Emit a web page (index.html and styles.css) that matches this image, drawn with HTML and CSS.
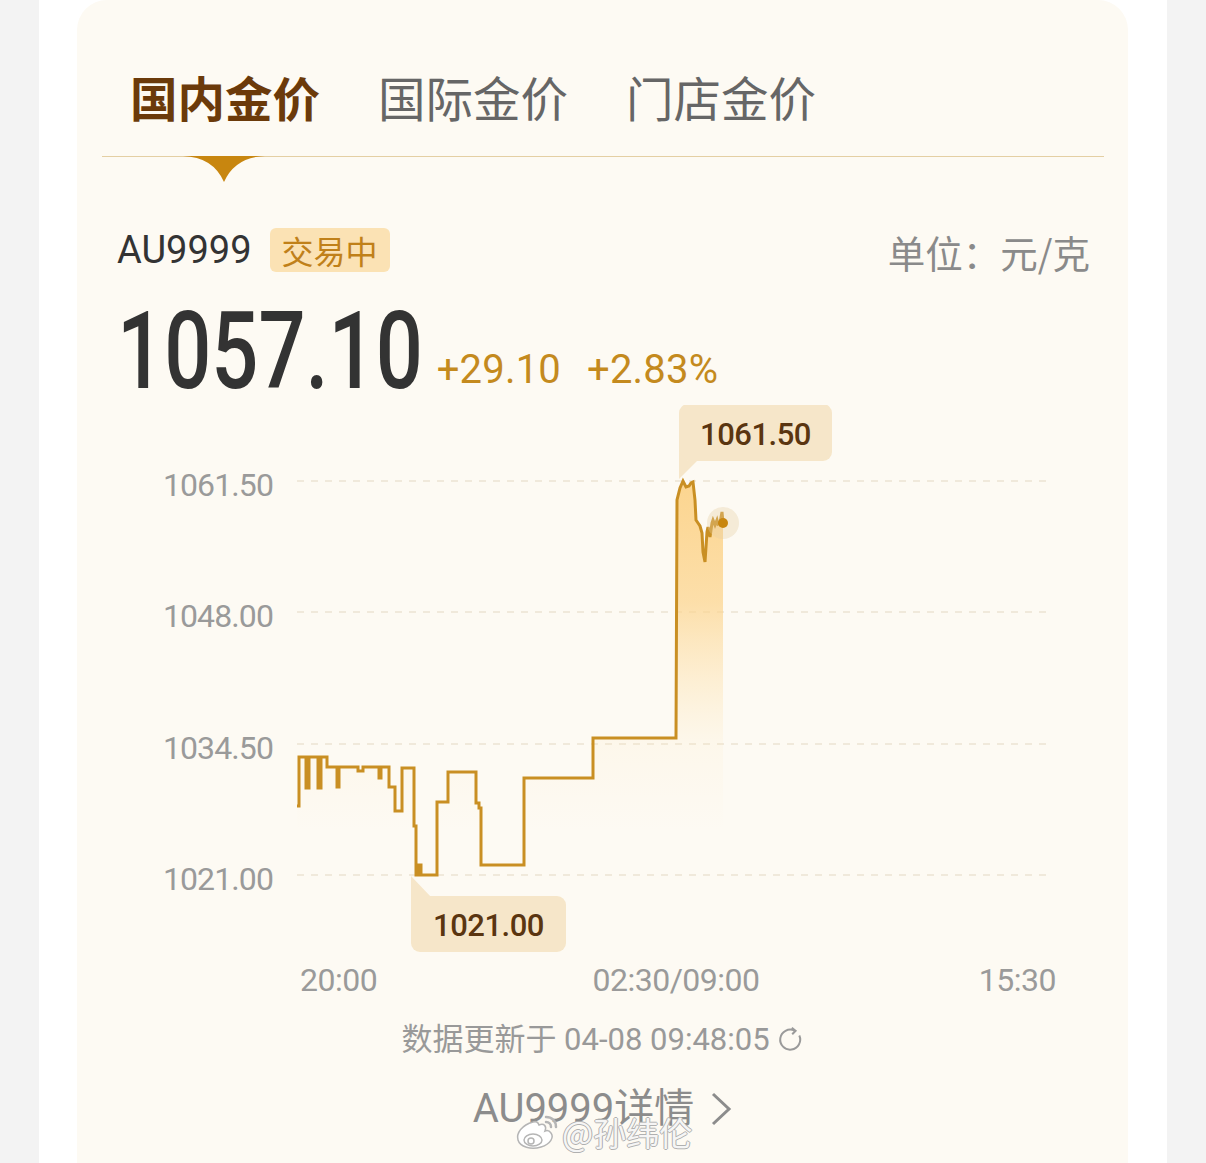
FILE: index.html
```html
<!DOCTYPE html>
<html lang="zh-CN">
<head>
<meta charset="utf-8">
<title>金价</title>
<link rel="stylesheet" href="styles.css">
</head>
<body>
<div class="page">
  <div class="card">
    <div class="tabs">
      <div class="tab active">国内金价<svg class="indicator" width="82" height="26" viewBox="0 0 82 26"><path d="M0 0 Q30 1 41 26 Q52 1 82 0 Z" fill="#c8860f"/></svg></div>
      <div class="tab">国际金价</div>
      <div class="tab">门店金价</div>
    </div>

    <div class="info-row">
      <div class="symbol">AU9999</div>
      <div class="badge">交易中</div>
      <div class="unit">单位：元/克</div>
    </div>

    <div class="price-row">
      <span class="price-num">1057.10</span><span class="change">+29.10</span><span class="change">+2.83%</span>
    </div>

    <svg class="chart" width="1051" height="600" viewBox="77 405 1051 600">
      <defs>
        <linearGradient id="fillg" gradientUnits="userSpaceOnUse" x1="0" y1="481" x2="0" y2="830">
          <stop offset="0" stop-color="#fcd38a" stop-opacity="0.95"/>
          <stop offset="0.35" stop-color="#fcd38a" stop-opacity="0.7"/>
          <stop offset="0.75" stop-color="#fde3b0" stop-opacity="0.12"/>
          <stop offset="1" stop-color="#fde3b0" stop-opacity="0"/>
        </linearGradient>
      </defs>
      <g class="grid">
        <line x1="297" y1="481" x2="1052" y2="481"/>
        <line x1="297" y1="612" x2="1052" y2="612"/>
        <line x1="297" y1="744" x2="1052" y2="744"/>
        <line x1="297" y1="875" x2="1052" y2="875"/>
      </g>
      <g class="ylabels">
        <text x="273" y="496">1061.50</text>
        <text x="273" y="627">1048.00</text>
        <text x="273" y="759">1034.50</text>
        <text x="273" y="890">1021.00</text>
      </g>
      <path class="area" d="M297,806 L299,806 L299,757 L306,757 L306,788 L309,788 L309,757 L318,757 L318,788 L321,788 L321,757 L327,757 L327,767 L337,767 L337,787 L339,787 L339,767 L358,767 L358,771 L363,771 L363,767 L379,767 L379,778 L381,778 L381,767 L389,767 L389,787 L395,787 L395,811 L402,811 L402,768 L414,768 L414,826 L416,826 L416,875 L418,875 L418,865 L421,865 L421,875 L437,875 L437,802 L448,802 L448,772 L476,772 L476,803 L479,803 L479,808 L481,808 L481,865 L524,865 L524,778 L593,778 L593,738 L676,738 L677,500 L680,488 L683,481 L686,487 L689,486 L691,483 L693,482 L695,500 L696,520 L698,523 L700,526 L702,533 L703,552 L705,562 L707,532 L708,527 L710,537 L712,523 L713,520 L715,525 L717,520 L718,524 L720,523 L722,512 L723,523 L723,900 L297,900 Z" fill="url(#fillg)"/>
      <path class="line" d="M297,806 L299,806 L299,757 L306,757 L306,788 L309,788 L309,757 L318,757 L318,788 L321,788 L321,757 L327,757 L327,767 L337,767 L337,787 L339,787 L339,767 L358,767 L358,771 L363,771 L363,767 L379,767 L379,778 L381,778 L381,767 L389,767 L389,787 L395,787 L395,811 L402,811 L402,768 L414,768 L414,826 L416,826 L416,875 L418,875 L418,865 L421,865 L421,875 L437,875 L437,802 L448,802 L448,772 L476,772 L476,803 L479,803 L479,808 L481,808 L481,865 L524,865 L524,778 L593,778 L593,738 L676,738 L677,500 L680,488 L683,481 L686,487 L689,486 L691,483 L693,482 L695,500 L696,520 L698,523 L700,526 L702,533 L703,552 L705,562 L707,532 L708,527 L710,537 L712,523 L713,520 L715,525 L717,520 L718,524 L720,523 L722,512 L723,523"/>
      <circle cx="723" cy="523" r="16" fill="#e6cfa4" fill-opacity="0.35"/>
      <circle cx="723" cy="523" r="5" fill="#c8860f"/>

      <g class="tip">
        <rect x="679" y="404" width="153" height="57" rx="9"/>
        <path d="M679 452 L679 479 L697 461 L688 461 Z"/>
        <text x="755.5" y="445">1061.50</text>
      </g>
      <g class="tip">
        <rect x="411" y="896" width="155" height="56" rx="9"/>
        <path d="M411 876 L411 905 L420 897 L431 897 Z"/>
        <text x="488.5" y="936">1021.00</text>
      </g>

      <g class="xlabels">
        <text x="300" y="991" text-anchor="start">20:00</text>
        <text x="676" y="991" text-anchor="middle">02:30/09:00</text>
        <text x="1056" y="991" text-anchor="end">15:30</text>
      </g>
    </svg>

    <div class="status">数据更新于 04-08 09:48:05<svg class="refresh" width="26" height="26" viewBox="0 0 26 26"><path d="M21.3 8.5 A10 10 0 1 1 16.5 3.6" fill="none" stroke="#9a9a9a" stroke-width="2"/><path d="M13.8 0.8 L17.6 3.8 L14.2 7.2" fill="none" stroke="#9a9a9a" stroke-width="2"/></svg></div>

    <div class="details">
      <span>AU9999详情</span>
      <svg class="chev" width="22" height="34" viewBox="0 0 22 34"><path d="M3 2 L19 17 L3 32" fill="none" stroke="#8c8c8c" stroke-width="3"/></svg>
      <div class="watermark">
        <svg width="46" height="38" viewBox="0 0 46 38"><path d="M19 9 C8 12 2 20 4 27 C6 34 17 37 27 34 C37 31 40 24 37 20 C35 17 33 17 31 18 C33 13 30 10 25 12 C24 9 22 8 19 9 Z" fill="#fff" stroke="#b5b5b5" stroke-width="1.5"/><ellipse cx="19" cy="27" rx="9" ry="6" fill="#fff" stroke="#b5b5b5" stroke-width="1.5"/><circle cx="17" cy="28" r="3" fill="#fff" stroke="#b5b5b5" stroke-width="1.5"/><path d="M32 4 C38 4 42 8 42 14 M32 9 C35 9 37 11 37 14" fill="none" stroke="#b5b5b5" stroke-width="2.5" stroke-linecap="round"/></svg>
        <span>@孙纬伦</span>
      </div>
    </div>
  </div>
</div>
</body>
</html>
```

FILE: styles.css
```css
* { box-sizing: border-box; }
html, body { margin: 0; padding: 0; }
body {
  background: #f3f3f3;
  font-family: "Roboto", "Noto Sans CJK SC", sans-serif;
  height: 1163px;
  overflow: hidden;
}
.page {
  width: 1128px;
  margin-left: 39px;
  background: #ffffff;
  height: 1163px;
  padding: 0 39px 0 38px;
}
.card {
  width: 1051px;
  height: 1200px;
  background: #fdfaf3;
  border-radius: 30px 30px 0 0;
}
.tabs {
  margin: 0 24px 0 25px;
  padding: 73px 0 35px 28px;
  border-bottom: 1px solid #e4cfa3;
  display: flex;
  gap: 58px;
}
.tab {
  position: relative;
  font-family: "Noto Sans CJK SC", sans-serif;
  font-size: 47.5px;
  line-height: 48px;
  color: #666666;
}
.tab.active {
  color: #6b3a0a;
  font-weight: 700;
}
.indicator {
  position: absolute;
  left: 53px;
  top: 83px;
  display: block;
}
.info-row {
  display: flex;
  align-items: center;
  margin: 71px 38px 0 40px;
  height: 44px;
}
.symbol {
  font-size: 38px;
  color: #333333;
  line-height: 44px;
}
.badge {
  margin-left: 18px;
  background: #fbe2b4;
  color: #c08019;
  font-family: "Noto Sans CJK SC", sans-serif;
  font-size: 32px;
  line-height: 44px;
  height: 44px;
  padding: 0 12px;
  border-radius: 6px;
}
.unit {
  margin-left: auto;
  font-family: "Noto Sans CJK SC", sans-serif;
  font-size: 37.5px;
  color: #8a8a8a;
  line-height: 44px;
  padding-top: 4px;
}
.price-row {
  margin: 26px 0 0 40px;
  height: 107px;
  line-height: 107px;
  white-space: nowrap;
}
.price-num {
  display: inline-block;
  font-size: 107px;
  font-weight: 500;
  color: #333333;
  transform: scaleX(0.775);
  transform-origin: left center;
  margin-right: -75px;
}
.change {
  display: inline-block;
  font-size: 40px;
  font-weight: 400;
  color: #c48a1e;
  letter-spacing: 0.2px;
  vertical-align: 5px;
  margin-right: 26px;
}
.chart {
  display: block;
}
.grid line {
  stroke: #ebe3d4;
  stroke-width: 1.5;
  stroke-dasharray: 7 7;
}
.ylabels text {
  font-family: "Roboto", sans-serif;
  font-size: 32px;
  fill: #9a9a9a;
  text-anchor: end;
  letter-spacing: -0.9px;
}
.xlabels text {
  font-family: "Roboto", sans-serif;
  font-size: 32px;
  fill: #9a9a9a;
  letter-spacing: -0.5px;
}
.line {
  fill: none;
  stroke: #c98f23;
  stroke-width: 3;
  stroke-linejoin: miter;
}
.tip rect, .tip path {
  fill: #f6e6c9;
}
.tip text {
  font-family: "Roboto", sans-serif;
  font-size: 31px;
  font-weight: 500;
  fill: #5a3510;
  text-anchor: middle;
  letter-spacing: -0.5px;
}
.status {
  margin-top: 15px;
  height: 40px;
  line-height: 40px;
  display: flex;
  justify-content: center;
  align-items: center;
  font-size: 31px;
  color: #999999;
}
.refresh {
  margin-left: 8px;
  display: block;
}
.details {
  position: relative;
  margin-top: 24px;
  height: 50px;
  display: flex;
  justify-content: center;
  align-items: center;
  font-size: 40px;
  color: #8c8c8c;
  line-height: 50px;
}
.chev {
  margin-left: 16px;
  display: block;
}
.watermark {
  position: absolute;
  left: 437px;
  top: 28px;
  display: flex;
  align-items: center;
  gap: 2px;
}
.watermark span {
  font-family: "Noto Sans CJK SC", sans-serif;
  font-size: 33px;
  line-height: 40px;
  color: rgba(255, 255, 255, 0.9);
  text-shadow: 1px 0 0 #b0b0b0, -1px 0 0 #b0b0b0, 0 1px 0 #b0b0b0, 0 -1px 0 #b0b0b0;
}
```
